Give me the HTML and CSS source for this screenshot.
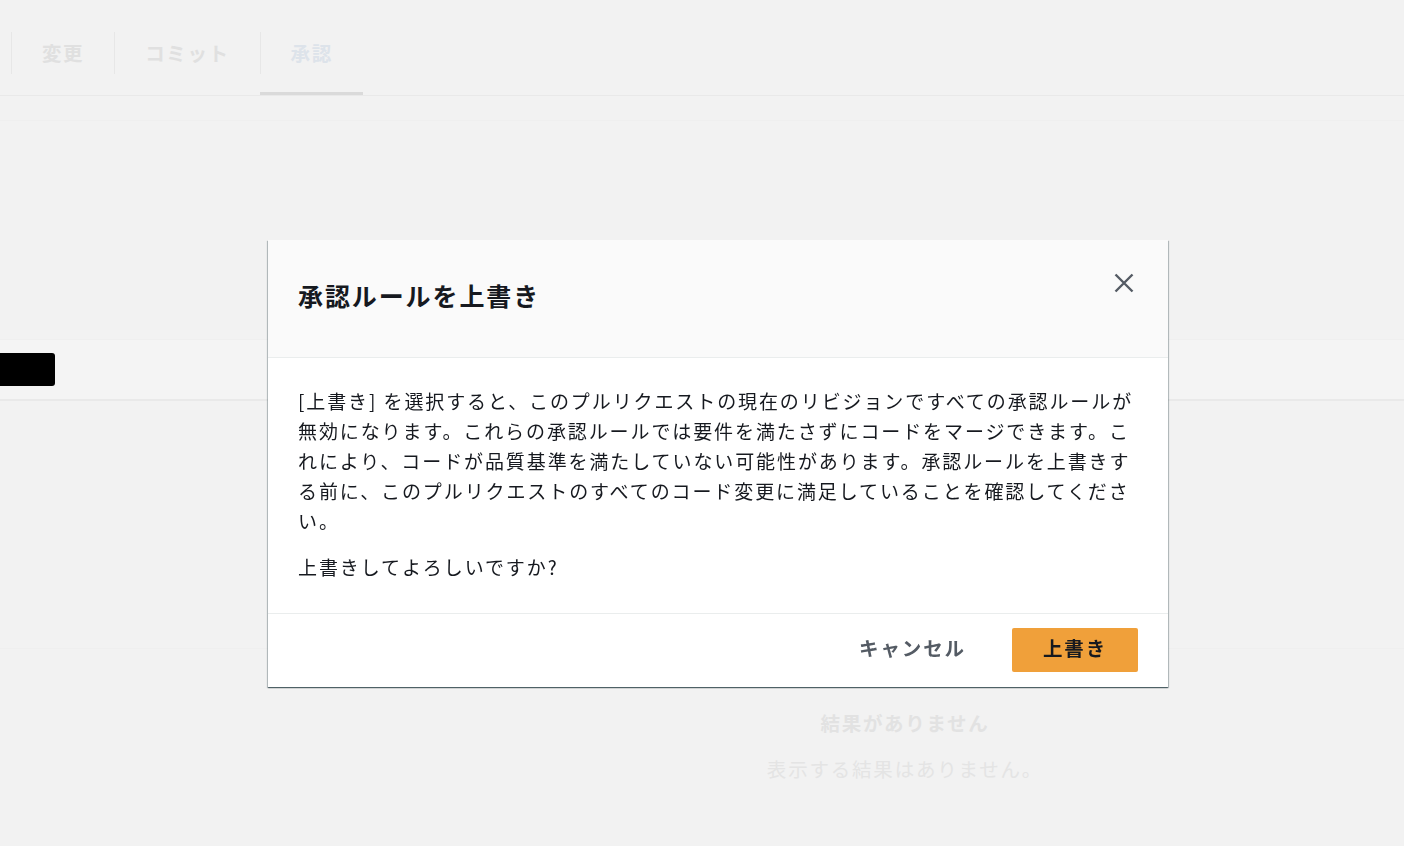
FILE: index.html
```html
<!DOCTYPE html>
<html lang="ja">
<head>
<meta charset="utf-8">
<title>承認ルールを上書き</title>
<link rel="stylesheet" href="styles.css">
</head>
<body>
<div class="page">
  <nav class="tabs">
    <div class="tab"><span class="tab-label">変更</span></div>
    <div class="tab"><span class="tab-label">コミット</span></div>
    <div class="tab active"><span class="tab-label">承認</span></div>
  </nav>
  <div class="subbar"></div>
  <div class="spacer"></div>
  <div class="band"><div class="redact"></div></div>
  <div class="section"></div>
  <div class="empty">
    <div class="empty-title">結果がありません</div>
    <div class="empty-sub">表示する結果はありません。</div>
  </div>
</div>

<div class="overlay">
  <div class="modal" role="dialog">
    <div class="modal-header">
      <h2 class="modal-title">承認ルールを上書き</h2>
      <button class="close" aria-label="閉じる">
        <svg width="20" height="20" viewBox="0 0 20 20"><path d="M1.5 1.5 L18.5 18.5 M18.5 1.5 L1.5 18.5" stroke="#545b64" stroke-width="2.4" fill="none"/></svg>
      </button>
    </div>
    <div class="modal-body">
      <p>[上書き] を選択すると、このプルリクエストの現在のリビジョンですべての承認ルールが無効になります。これらの承認ルールでは要件を満たさずにコードをマージできます。これにより、コードが品質基準を満たしていない可能性があります。承認ルールを上書きする前に、このプルリクエストのすべてのコード変更に満足していることを確認してください。</p>
      <p>上書きしてよろしいですか?</p>
    </div>
    <div class="modal-footer">
      <button class="btn-cancel">キャンセル</button>
      <button class="btn-primary">上書き</button>
    </div>
  </div>
</div>
</body>
</html>
```

FILE: styles.css
```css
* { box-sizing: border-box; }
html, body { margin: 0; padding: 0; }
body {
  background: #f2f2f2;
  font-family: "Noto Sans CJK JP", "Noto Sans", sans-serif;
  color: #16191f;
  width: 1404px;
  height: 846px;
  overflow: hidden;
}

.tabs {
  display: flex;
  height: 96px;
  padding-left: 11px;
  border-bottom: 1px solid #e9e9e9;
}
.tab {
  height: 95px;
  padding-top: 32px;
}
.tab-label {
  display: flex;
  align-items: center;
  height: 42px;
  padding: 0 30px 2px 30px;
  border-left: 1px solid #e7e7e7;
  font-size: 19.5px;
  font-weight: 700;
  letter-spacing: 1.6px;
  color: #e0e0e0;
  white-space: nowrap;
}
.tab.active { border-bottom: 3px solid #dadada; }
.tab.active .tab-label { color: #dde3ea; }

.subbar { height: 25px; border-bottom: 1px solid #efefef; }
.spacer { height: 218px; }
.band {
  height: 62px;
  background: #f4f4f4;
  border-top: 1px solid #efefef;
  border-bottom: 2px solid #e9e9e9;
  padding-top: 13px;
}
.redact {
  width: 55px;
  height: 33px;
  background: #000;
  border-radius: 0 3px 3px 0;
}
.section { height: 248px; border-bottom: 1px solid #efefef; }
.empty {
  padding-left: 406px;
  padding-top: 59px;
  text-align: center;
}
.empty-title {
  font-size: 19.5px;
  font-weight: 700;
  letter-spacing: 1.7px;
  line-height: 30px;
  color: #e2e2e2;
}
.empty-sub {
  margin-top: 16px;
  font-size: 19.5px;
  letter-spacing: 1.8px;
  line-height: 30px;
  color: #e4e4e4;
}

.overlay {
  position: fixed;
  inset: 0;
  display: flex;
  justify-content: center;
  align-items: flex-start;
  padding: 240px 0 0 32px;
}
.modal {
  width: 900px;
  background: #fff;
  box-shadow: 0 1px 1px 0 rgba(0, 28, 36, .5), 1px 1px 1px 0 rgba(0, 28, 36, .2), -1px 1px 1px 0 rgba(0, 28, 36, .2);
}
.modal-header {
  display: flex;
  justify-content: space-between;
  align-items: flex-start;
  height: 118px;
  padding: 33px 34px 0 30px;
  background: #fafafa;
  border-bottom: 1px solid #eaeded;
}
.modal-title {
  margin: 4px 0 0;
  font-size: 25px;
  line-height: 36px;
  font-weight: 700;
  letter-spacing: 1.9px;
  color: #16191f;
}
.close {
  border: 0;
  padding: 0;
  background: none;
  width: 20px;
  height: 20px;
  display: block;
}
.close svg { display: block; }
.modal-body {
  padding: 28px 30px 31px;
  border-bottom: 1px solid #eaeded;
}
.modal-body p {
  margin: 0 0 16px;
  font-size: 19px;
  line-height: 30px;
  letter-spacing: 1.9px;
}
.modal-body p:last-child { margin-bottom: 0; }
.modal-footer {
  display: flex;
  justify-content: flex-end;
  align-items: center;
  padding: 14px 30px 15px;
}
.btn-cancel {
  border: 0;
  background: none;
  font-family: inherit;
  font-size: 19.5px;
  font-weight: 700;
  letter-spacing: 1.9px;
  color: #545b64;
  padding: 0 23px 5px;
  height: 44px;
  margin-right: 23px;
}
.btn-primary {
  border: 0;
  border-radius: 2px;
  background: #f0a03a;
  font-family: inherit;
  font-size: 19.5px;
  font-weight: 700;
  letter-spacing: 1.8px;
  color: #16191f;
  width: 126px;
  height: 44px;
  padding: 0 0 5px;
}
```
